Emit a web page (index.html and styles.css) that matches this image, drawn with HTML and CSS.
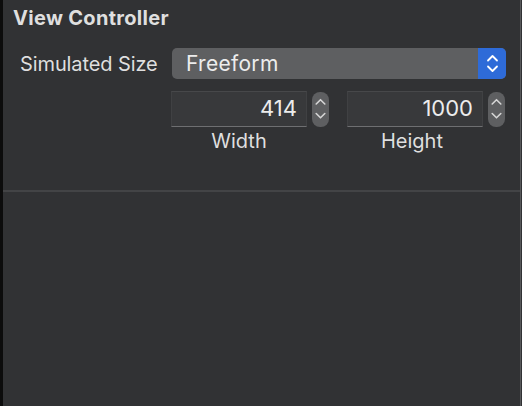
FILE: index.html
```html
<!DOCTYPE html>
<html>
<head>
<meta charset="utf-8">
<link rel="stylesheet" href="styles.css">
</head>
<body>
<div class="panel">
  <div class="title">View Controller</div>
  <div class="size-row">
    <div class="label">Simulated Size</div>
    <div class="popup">
      <span class="popup-text">Freeform</span>
      <span class="popup-arrows">
        <svg width="15" height="31" viewBox="0 0 15 31"><path d="M3 12.5 L7.5 8 L12 12.5 M3 18.5 L7.5 23 L12 18.5" fill="none" stroke="#fff" stroke-width="1.8" stroke-linecap="round" stroke-linejoin="round"/></svg>
      </span>
    </div>
  </div>
  <div class="dims">
    <div class="dim">
      <div class="field-row">
        <div class="field">414</div>
        <div class="stepper"><svg width="17" height="35" viewBox="0 0 17 35"><path d="M4.2 12 L8.5 7.7 L12.8 12 M4.2 21.5 L8.5 25.8 L12.8 21.5" fill="none" stroke="#d6d6d6" stroke-width="1.6" stroke-linecap="round" stroke-linejoin="round"/></svg></div>
      </div>
      <div class="cap">Width</div>
    </div>
    <div class="dim">
      <div class="field-row">
        <div class="field">1000</div>
        <div class="stepper"><svg width="17" height="35" viewBox="0 0 17 35"><path d="M4.2 12 L8.5 7.7 L12.8 12 M4.2 21.5 L8.5 25.8 L12.8 21.5" fill="none" stroke="#d6d6d6" stroke-width="1.6" stroke-linecap="round" stroke-linejoin="round"/></svg></div>
      </div>
      <div class="cap">Height</div>
    </div>
  </div>
  <div class="sep"></div>
</div>
</body>
</html>
```
FILE: styles.css
```css
html, body {
  margin: 0;
  padding: 0;
  background: #313234;
}
.panel {
  width: 517px;
  height: 406px;
  border-left: 3px solid #0c0c0c;
  border-right: 1px solid #58595b;
  margin-right: 1px;
  background: #313234;
  font-family: Inter, "Noto Sans", sans-serif;
  color: #dfdfdf;
  box-sizing: content-box;
}
.title {
  font-weight: 700;
  font-size: 20px;
  padding: 6px 0 0 10px;
  height: 34px;
  box-sizing: border-box;
  line-height: 24px;
  letter-spacing: 0.3px;
}
.size-row {
  display: flex;
  align-items: center;
  padding-left: 17px;
  height: 31px;
  margin-top: 14px;
}
.label {
  width: 152px;
  font-size: 20px;
  letter-spacing: -0.1px;
}
.popup {
  width: 334px;
  height: 31px;
  border-radius: 5px;
  background: #5e5f61;
  display: flex;
  align-items: center;
  overflow: hidden;
}
.popup-text {
  flex: 1;
  padding-left: 14px;
  font-size: 21px;
  letter-spacing: 0.3px;
  color: #ececec;
}
.popup-arrows {
  width: 28px;
  height: 31px;
  background: #2e6bd8;
  display: flex;
  align-items: center;
  justify-content: center;
}
.dims {
  display: flex;
  gap: 18px;
  padding-left: 168px;
  margin-top: 12px;
}
.dim {
  display: flex;
  flex-direction: column;
}
.field-row {
  display: flex;
  gap: 5px;
  align-items: flex-end;
}
.field {
  width: 136px;
  height: 36px;
  box-sizing: border-box;
  background: #38393b;
  border-top: 1px solid #47484a;
  border-left: 1px solid #404143;
  border-right: 1px solid #404143;
  border-bottom: 1px solid #6e6f71;
  text-align: right;
  padding-right: 9px;
  font-size: 22px;
  line-height: 33px;
  color: #ececec;
}
.stepper {
  width: 17px;
  height: 35px;
  border-radius: 8px;
  background: #5e5f61;
  display: flex;
}
.cap {
  width: 136px;
  text-align: center;
  font-size: 20px;
  margin-top: 3px;
  line-height: 22px;
}
.dim + .dim .cap {
  padding-right: 6px;
  box-sizing: border-box;
}
.sep {
  height: 2px;
  background: #434446;
  margin-top: 38px;
}
```
